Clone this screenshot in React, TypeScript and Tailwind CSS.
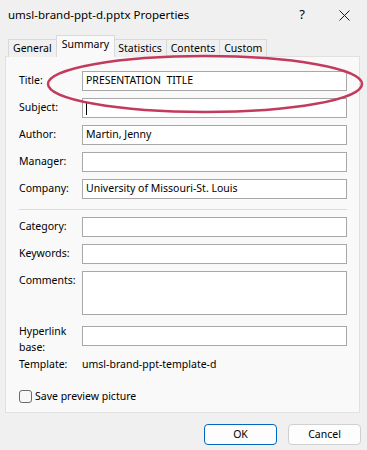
import React from 'react';

const tabs = ['General', 'Summary', 'Statistics', 'Contents', 'Custom'];

const fields = [
  { label: 'Title:', value: 'PRESENTATION\u00a0\u00a0TITLE' },
  { label: 'Subject:', value: '', caret: true },
  { label: 'Author:', value: 'Martin, Jenny' },
  { label: 'Manager:', value: '' },
  { label: 'Company:', value: 'University of Missouri-St. Louis' },
];

function Field({ label, value, caret }: { label: string; value: string; caret?: boolean }) {
  return (
    <div className="flex items-center h-[20px]">
      <span className="w-[63px] shrink-0">{label}</span>
      <div className="flex-1 h-[20px] bg-white border border-[#a8a8a8] flex items-center px-[3px]">
        {caret && <span className="w-px h-[13px] bg-black" />}
        {value}
      </div>
    </div>
  );
}

export default function App() {
  return (
    <div
      className="relative w-[367px] h-[450px] bg-[#f0f0f0] text-[10.5px] text-black overflow-hidden"
      style={{ fontFamily: '"Noto Sans", "Open Sans", sans-serif' }}
    >
      {/* Title bar */}
      <div className="h-[30px] flex items-center pl-[8px]">
        <span className="flex-1 text-[11.5px]">umsl-brand-ppt-d.pptx Properties</span>
        <span className="w-[20px] text-center text-[13px] mr-[27px]">?</span>
        <svg width="11" height="11" viewBox="0 0 11 11" className="mr-[17px]">
          <path d="M0.5 0.5 L10.5 10.5 M10.5 0.5 L0.5 10.5" stroke="#1a1a1a" strokeWidth="1" />
        </svg>
      </div>

      {/* Tabs */}
      <div className="mt-[5px] ml-[8px] h-[22px] flex items-end relative z-10 -mb-px">
        {tabs.map(t =>
          t === 'Summary' ? (
            <div
              key={t}
              className="h-[22px] px-[5px] pt-[1px] bg-[#f9f9f9] border border-b-0 border-[#d9d9d9] -mx-px z-10"
            >
              {t}
            </div>
          ) : (
            <div
              key={t}
              className="h-[18px] px-[4px] flex items-center bg-[#f0f0f0] border border-b-0 border-[#d9d9d9] -ml-px first:ml-0"
            >
              {t}
            </div>
          )
        )}
      </div>

      {/* Panel */}
      <div className="ml-[5px] w-[355px] h-[357px] bg-[#f9f9f9] border border-[#e0e0e0] pl-[13px] pr-[12px] pt-[14px] flex flex-col">
        <div className="flex flex-col gap-[7px]">
          {fields.map(f => (
            <Field key={f.label} {...f} />
          ))}
        </div>

        <div className="mt-[10px] h-px bg-[#dcdcdc]" />

        <div className="mt-[7px] flex flex-col gap-[7px]">
          <Field label="Category:" value="" />
          <Field label="Keywords:" value="" />
          <div className="flex items-start h-[44px]">
            <span className="w-[63px] shrink-0 mt-[2px]">Comments:</span>
            <div className="flex-1 h-[44px] bg-white border border-[#a8a8a8]" />
          </div>
        </div>

        <div className="mt-[11px] flex items-start h-[20px]">
          <span className="w-[63px] shrink-0 -mt-[3px] leading-[16px]">
            Hyperlink
            <br />
            base:
          </span>
          <div className="flex-1 h-[20px] bg-white border border-[#a8a8a8]" />
        </div>

        <div className="mt-[10px] flex leading-[16px]">
          <span className="w-[63px] shrink-0">Template:</span>
          <span>umsl-brand-ppt-template-d</span>
        </div>

        <div className="mt-[16px] flex items-center gap-[3px] leading-[16px]">
          <span className="w-[13px] h-[13px] rounded-[3px] border border-[#6b6b6b] bg-[#f7f7f7]" />
          <span>Save preview picture</span>
        </div>
      </div>

      {/* Buttons */}
      <div className="mt-[11px] flex justify-end gap-[11px] pr-[6px]">
        <button className="w-[73px] h-[21px] rounded-[4px] border border-[#0067c0] bg-[#fdfdfd]">OK</button>
        <button className="w-[73px] h-[21px] rounded-[4px] border border-[#d0d0d0] bg-[#fdfdfd]">Cancel</button>
      </div>

      {/* Annotation ellipse */}
      <svg className="absolute inset-0 pointer-events-none z-20" width="367" height="450">
        <ellipse cx="205" cy="84" rx="157" ry="28" fill="none" stroke="#c23a5c" strokeWidth="2.5" />
      </svg>
    </div>
  );
}
